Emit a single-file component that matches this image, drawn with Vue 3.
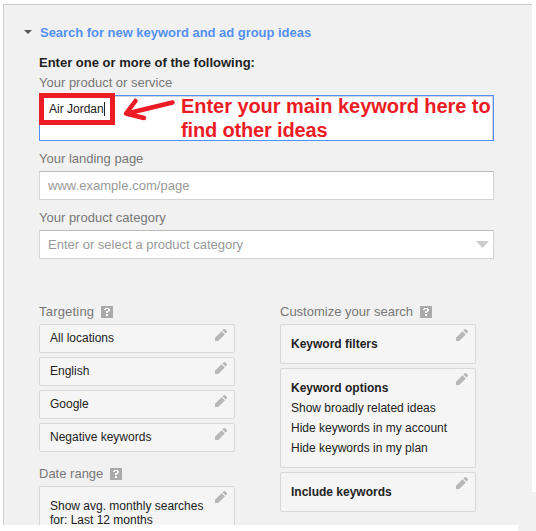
<template>
  <div class="page">
    <div class="corner-patch"></div>
    <main class="panel">
      <h2 class="panel-title">
        <svg class="toggle" width="8" height="4" viewBox="0 0 8 4"><path d="M0 0h8L4 4z" fill="#555" /></svg>
        <span>Search for new keyword and ad group ideas</span>
      </h2>

      <div class="form">
        <h3 class="intro"><span>Enter one or more of the following:</span></h3>

        <div class="field">
          <label class="label product-label">Your product or service</label>
          <div class="product-box">
            <span class="product-value">Air Jordan</span><i class="caret"></i>
            <div class="highlight"></div>
            <svg class="arrow" width="54" height="24" viewBox="0 0 54 24" fill="none" stroke="#ed1c24" stroke-width="4.500" stroke-linecap="round" stroke-linejoin="round">
              <path d="M50.500 5.500L5 16.500M13.500 4L4 16.500l18 4.500" />
            </svg>
            <p class="note">
              <span class="note-first">Enter your main keyword here to</span><br>
              <span class="note-second">find other ideas</span>
            </p>
          </div>
        </div>

        <div class="field">
          <label class="label landing-label">Your landing page</label>
          <div class="input"><span class="landing-hint">www.example.com/page</span></div>
        </div>

        <div class="field">
          <label class="label category-label">Your product category</label>
          <div class="input">
            <span class="category-hint">Enter or select a product category</span>
            <svg width="13" height="7" viewBox="0 0 13 7"><path d="M0 0h13L6.500 7z" fill="#ccc" /></svg>
          </div>
        </div>
      </div>

      <div class="columns">
        <section v-for="(column, index) in columns" :key="index" class="column">
          <div v-for="group in column" :key="group.title" class="group">
            <h4 class="label group-title">
              <span :class="group.spacing">{{ group.title }}</span>
              <svg class="help" width="12" height="12" viewBox="0 0 12 12" shape-rendering="crispEdges">
                <path d="M0 0h12v12H0z" fill="#aaa" />
                <path d="M4 2h4v1h1v2H8v1H7v1H5V5h2V3H5v1H3V3h1zM5 8h2v2H5z" fill="#fff" />
              </svg>
            </h4>
            <div v-for="(card, i) in group.cards" :key="i" class="card" :class="card.size">
              <strong v-if="card.title">{{ card.title }}</strong>
              <span v-for="line in card.lines" :key="line" class="line">{{ line }}</span>
              <svg class="pencil" width="12" height="12" viewBox="0 0 12 12" fill="#b7b7b7">
                <path d="M0 8.800L6.600 2.200 9.800 5.400 3.200 12H0zM7.400 1.400L8.600.3Q9.400-.3 10.200.3L11.700 1.800Q12.300 2.600 11.700 3.400L10.600 4.600z" />
              </svg>
            </div>
          </div>
        </section>
      </div>
    </main>
  </div>
</template>

<script setup>
const columns = [
  [
    {
      title: 'Targeting',
      spacing: 'wide',
      cards: [
        { lines: ['All locations'] },
        { lines: ['English'] },
        { lines: ['Google'] },
        { lines: ['Negative keywords'] }
      ]
    },
    {
      title: 'Date range',
      cards: [{ size: 'date', lines: ['Show avg. monthly searches', 'for: Last 12 months'] }]
    }
  ],
  [
    {
      title: 'Customize your search',
      cards: [
        { size: 'medium', title: 'Keyword filters' },
        {
          size: 'large',
          title: 'Keyword options',
          lines: ['Show broadly related ideas', 'Hide keywords in my account', 'Hide keywords in my plan']
        },
        { size: 'medium', title: 'Include keywords' }
      ]
    }
  ]
];
</script>

<style>
body {
  background: #fff;
}
</style>

<style scoped>
.page {
  position: relative;
  width: 536px;
  height: 531px;
  padding: 4px 0 0 3px;
  box-sizing: border-box;
  overflow: hidden;
  font-family: "Liberation Sans", Arial, sans-serif;
  color: #222;
}

.page * {
  box-sizing: border-box;
}

.corner-patch {
  position: absolute;
  right: 0;
  bottom: 0;
  width: 18px;
  height: 39px;
  background: #f1f1f1;
}

/* the white strip below the panel stops at the patch */
.panel {
  position: relative;
  width: 529px;
  height: 521px;
  overflow: hidden;
  background: #f1f1f1;
  border-top: 1px solid #ccc;
  border-left: 1px solid #ccc;
}

h2,
h3,
h4,
p {
  margin: 0;
}

.panel-title {
  display: flex;
  align-items: center;
  gap: 8px;
  height: 16px;
  margin: 20px 0 0 20px;
  font-size: 13px;
  line-height: 16px;
  letter-spacing: -0.03px;
  color: #5491f5;
  white-space: nowrap;
}

.toggle {
  margin-bottom: 2px;
}

.form {
  width: 455px;
  margin: 14px 0 0 35px;
}

.intro {
  height: 20px;
  font-size: 13px;
  line-height: 16px;
}

.label {
  display: block;
  height: 20px;
  font-size: 13px;
  font-weight: normal;
  line-height: 16px;
  color: #777;
}

.field {
  margin-bottom: 10px;
}

.product-label {
  height: 20px;
}

.product-box {
  position: relative;
  display: flex;
  height: 46px;
  padding: 6px 0 0 9px;
  background: #fff;
  border: 1px solid #4d90fe;
  box-shadow: inset -1px 1px 0 #d4d4d4;
  font-size: 12px;
  line-height: 15px;
}

.caret {
  width: 1px;
  height: 14px;
  background: #222;
}

.highlight {
  position: absolute;
  top: -3px;
  left: -1px;
  width: 76px;
  height: 32px;
  border: 5px solid #ed1c24;
}

.arrow {
  position: absolute;
  top: 1px;
  left: 82px;
}

.note {
  position: absolute;
  top: -2px;
  left: 141px;
  font-size: 20px;
  font-weight: bold;
  line-height: 24px;
  letter-spacing: -0.05px;
  white-space: nowrap;
  color: #ed1c24;
}

.note-second {
  letter-spacing: -0.15px;
}

.input {
  display: flex;
  align-items: center;
  justify-content: space-between;
  height: 29px;
  padding: 0 4px 0 8px;
  background: #fff;
  border: 1px solid #d5d5d5;
  border-top-color: #bbb;
  font-size: 13px;
  color: #999;
}

.landing-hint {
  letter-spacing: 0.03px;
}

.input svg {
  margin-bottom: 1px;
}

.columns {
  display: flex;
  gap: 45px;
  margin: 44px 0 0 35px;
}

.column {
  width: 196px;
}

.group {
  margin-bottom: 13px;
}

.group-title {
  display: flex;
  gap: 7px;
  height: 21px;
  line-height: 18px;
  white-space: nowrap;
}

.wide {
  letter-spacing: 0.2px;
}

.help {
  margin-top: 3px;
}

.card {
  position: relative;
  height: 29px;
  margin-bottom: 4px;
  padding: 5px 10px;
  background: #f5f5f5;
  border: 1px solid #d8d8d8;
  border-radius: 2px;
  font-size: 12px;
  line-height: 16px;
}

.card strong,
.card .line {
  display: block;
  white-space: nowrap;
}

.card.medium {
  height: 40px;
  padding-top: 11px;
}

.card.large {
  height: 100px;
  padding-top: 9px;
  line-height: 20px;
}

.card.date {
  height: 50px;
  padding-top: 12px;
  line-height: 14px;
}

.pencil {
  position: absolute;
  top: 4px;
  right: 7px;
}
</style>
